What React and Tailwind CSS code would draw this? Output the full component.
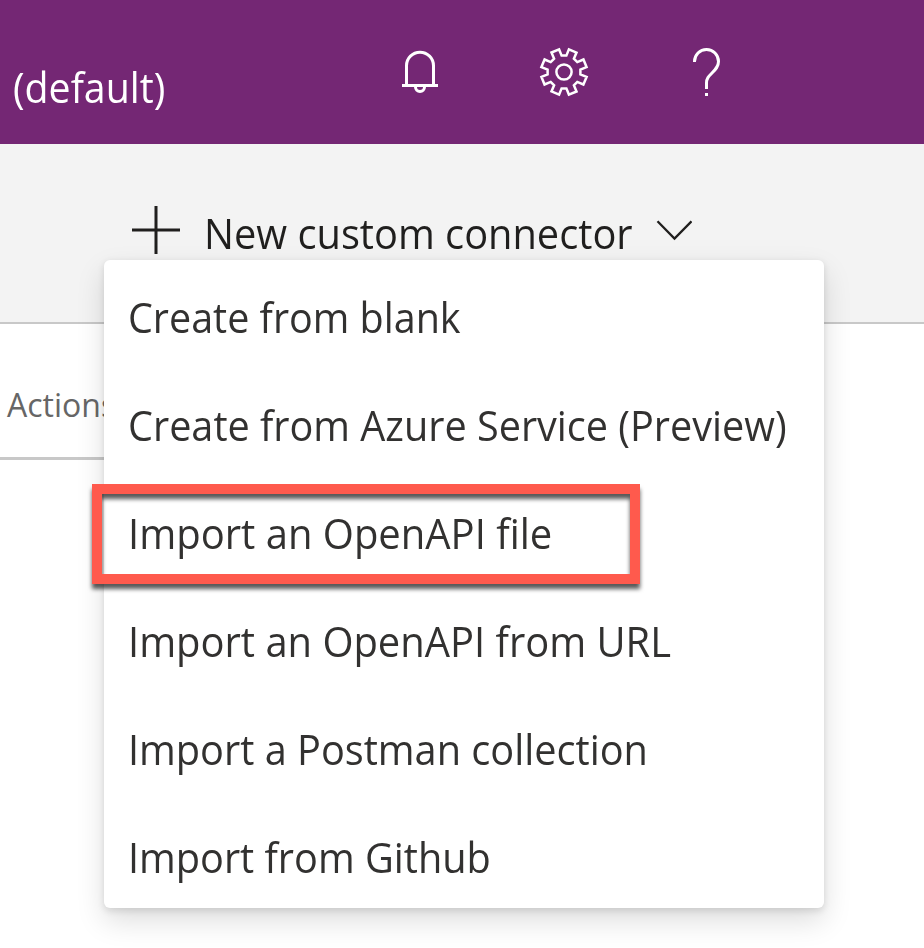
const menuItems = [
  { label: "Create from blank", fit: "scale-x-[0.94]" },
  { label: "Create from Azure Service (Preview)", fit: "scale-x-[0.943]" },
  { label: "Import an OpenAPI file", fit: "scale-x-[0.952]" },
  { label: "Import an OpenAPI from URL", fit: "scale-x-[0.95]" },
  { label: "Import a Postman collection", fit: "scale-x-[0.945]" },
  { label: "Import from Github", fit: "scale-x-[0.944]" },
];

function BellIcon() {
  return (
    <svg className="h-12 w-12" viewBox="0 0 48 48" fill="none" stroke="currentColor" strokeWidth="3">
      <path d="M10.500 37.500V17.700a13.500 13.500 0 0 1 27 0V37.500" />
      <path d="M6 37.500h36" />
      <path d="M19.500 38v1a4.500 4.500 0 0 0 9 0v-1" />
    </svg>
  );
}

function GearIcon() {
  const points = [];
  for (let i = 0; i < 8; i++) {
    const a = (i * Math.PI) / 4;
    for (const [x, y] of [[-2.4, -16.4], [2.4, -16.4], [4.9, -22.6], [12.5, -19.4]]) {
      points.push(
        `${(24 + x * Math.cos(a) - y * Math.sin(a)).toFixed(2)},${(24 + x * Math.sin(a) + y * Math.cos(a)).toFixed(2)}`
      );
    }
  }
  return (
    <svg className="h-12 w-12 overflow-visible" viewBox="0 0 48 48" fill="none" stroke="currentColor" strokeWidth="2.5">
      <polygon points={points.join(" ")} />
      <circle cx="24" cy="24" r="7.6" />
    </svg>
  );
}

function HelpIcon() {
  return (
    <svg className="h-12 w-12" viewBox="0 0 48 48" fill="none" stroke="currentColor" strokeWidth="3">
      <path d="M10.500 14v-.5a12 12 0 0 1 24 0c0 5-3 8-6.500 11.500s-5.500 5.500-5.500 10v6" />
      <path d="M22.500 45v3" />
    </svg>
  );
}

export default function App() {
  return (
    <div className="relative flex h-[948px] w-[924px] flex-col overflow-hidden bg-white font-['Open_Sans',sans-serif]">
      <header className="flex h-36 shrink-0 bg-[#742774] text-white">
        <div className="w-[396px] pl-[13px] pt-[58px] text-[42px] leading-[57px] whitespace-nowrap">
          <span className="inline-block origin-left scale-x-[0.935]">(default)</span>
        </div>
        <div className="flex items-center gap-24">
          <BellIcon />
          <GearIcon />
          <HelpIcon />
        </div>
      </header>

      <div className="flex h-[180px] shrink-0 items-start border-b-2 border-[#c8c8c8] bg-[#f3f3f3] pl-[132px] pt-[62px] text-[#201f1e]">
        <svg className="h-12 w-12" viewBox="0 0 48 48" stroke="currentColor" strokeWidth="3">
          <path d="M24 0v48M0 24h48" />
        </svg>
        <span className="-mt-0.5 ml-6 w-[452px] origin-left scale-x-[0.947] text-[42px] leading-[57px] whitespace-nowrap">
          New custom connector
        </span>
        <svg className="mt-3 h-6 w-9" viewBox="0 0 36 24" fill="none" stroke="currentColor" strokeWidth="2.3">
          <path d="M1.500 3.300l17 17.200 17-17.200" />
        </svg>
      </div>

      <div className="h-[136px] w-[420px] shrink-0 border-b-[3px] border-[#c8c8c8] pl-[7px] pt-[59px] text-[32px] leading-[44px] text-[#666]">
        Actions
      </div>

      <ul className="absolute left-[104px] top-[260px] w-[720px] rounded-md bg-white shadow-[0_12.8px_28.8px_rgba(0,0,0,0.132),0_2.4px_7.2px_rgba(0,0,0,0.108)]">
        {menuItems.map(({ label, fit }) => (
          <li key={label} className="flex h-[108px] items-center pl-6 pt-[5px] text-[42px] leading-none whitespace-nowrap text-[#323130]">
            <span className={`origin-left ${fit}`}>{label}</span>
          </li>
        ))}
      </ul>

      <div className="absolute left-[92px] top-[484px] h-[100px] w-[548px] border-[10px] border-[#ff5a4d] drop-shadow-[0_5px_2px_rgba(0,0,0,0.65)]" />
    </div>
  );
}
